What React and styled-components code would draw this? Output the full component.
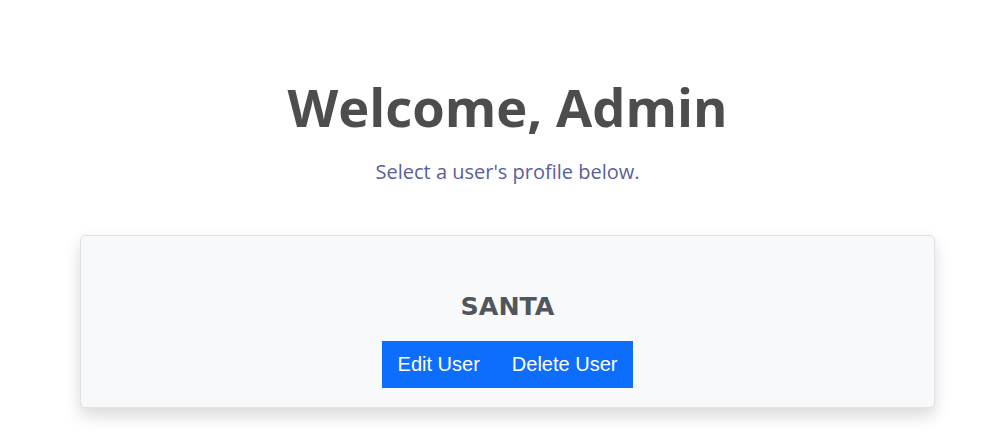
import React from "react";
import styled, { createGlobalStyle } from "styled-components";

const GlobalStyle = createGlobalStyle`
  body {
    margin: 0;
    background: #ffffff;
    font-family: "Open Sans", sans-serif;
  }
`;

const Page = styled.div`
  display: flex;
  flex-direction: column;
  align-items: center;
  padding: 72px 69px 40px 80px;
`;

const Title = styled.h1`
  margin: 0;
  font-family: "Open Sans", sans-serif;
  font-weight: 700;
  font-size: 52.5px;
  line-height: 70px;
  color: #4d4d4d;
`;

const Subtitle = styled.p`
  margin: 15px 0 0;
  font-size: 20px;
  line-height: 30px;
  color: #5a5f9c;
`;

const Card = styled.div`
  box-sizing: border-box;
  align-self: stretch;
  margin-top: 48px;
  padding: 56px 0 19px;
  display: flex;
  flex-direction: column;
  align-items: center;
  background: #f8f9fa;
  border: 1px solid #dee2e6;
  border-radius: 5px;
  box-shadow: 0 8px 16px rgba(0, 0, 0, 0.15);
`;

const UserName = styled.h2`
  margin: 0;
  font-family: "DejaVu Sans", sans-serif;
  font-weight: 700;
  font-size: 25.3px;
  line-height: 30px;
  color: #50565c;
`;

const Actions = styled.div`
  display: flex;
  margin-top: 19px;
`;

const ActionButton = styled.button`
  height: 47px;
  padding: 0 16px;
  border: none;
  border-radius: 0;
  background: #0d6efd;
  color: #ffffff;
  font-family: "Liberation Sans", Arial, sans-serif;
  font-size: 20px;
  cursor: pointer;
`;

export default function App() {
  return (
    <>
      <GlobalStyle />
      <Page>
        <Title>Welcome, Admin</Title>
        <Subtitle>Select a user's profile below.</Subtitle>
        <Card>
          <UserName>SANTA</UserName>
          <Actions>
            <ActionButton>Edit User</ActionButton>
            <ActionButton>Delete User</ActionButton>
          </Actions>
        </Card>
      </Page>
    </>
  );
}
